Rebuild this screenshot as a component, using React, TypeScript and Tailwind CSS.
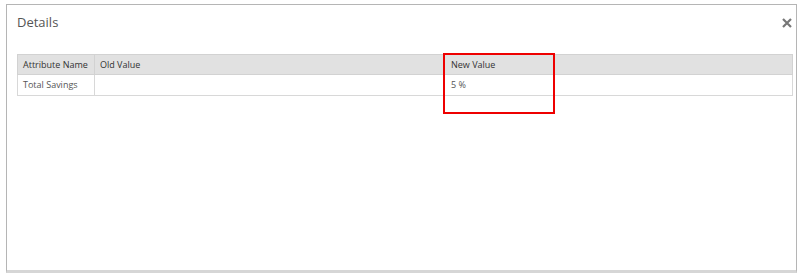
export default function App() {
  return (
    <div className="w-[800px] h-[276px] bg-white pt-[4px] pl-[6px]" style={{ fontFamily: '"Open Sans", sans-serif' }}>
      <div className="relative w-[791px] h-[269px] border border-[#b5b5b5] border-b-[3px] border-b-[#d6d6d6] bg-white">
        <div className="flex items-center justify-between h-[34px] pl-[10px] pr-[4px]">
          <span className="text-[13px] text-[#555] leading-none mt-[1px]">Details</span>
          <svg width="10" height="10" viewBox="0 0 10 10" className="mt-[1px]">
            <path d="M1 1L9 9M9 1L1 9" stroke="#777" strokeWidth="2.2" />
          </svg>
        </div>
        <div className="mt-[15px] ml-[10px] w-[776px]">
          <table className="w-full border-collapse text-[9px] text-[#333]">
            <thead>
              <tr className="bg-[#e1e1e1] h-[20px]">
                <th className="w-[77px] border border-[#d2d2d2] text-left font-normal px-[5px]">Attribute Name</th>
                <th className="w-[350px] border border-[#d2d2d2] text-left font-normal px-[5px]">Old Value</th>
                <th className="border border-[#d2d2d2] text-left font-normal px-[6px]">New Value</th>
              </tr>
            </thead>
            <tbody>
              <tr className="h-[21px] text-[#555]">
                <td className="border border-[#d8d8d8] px-[5px]">Total Savings</td>
                <td className="border border-[#d8d8d8] px-[5px]"></td>
                <td className="border border-[#d8d8d8] px-[6px]">5 %</td>
              </tr>
            </tbody>
          </table>
        </div>
        <div className="absolute left-[436px] top-[48px] w-[112px] h-[61px] border-[2.5px] border-[#ee0000]"></div>
      </div>
    </div>
  );
}
